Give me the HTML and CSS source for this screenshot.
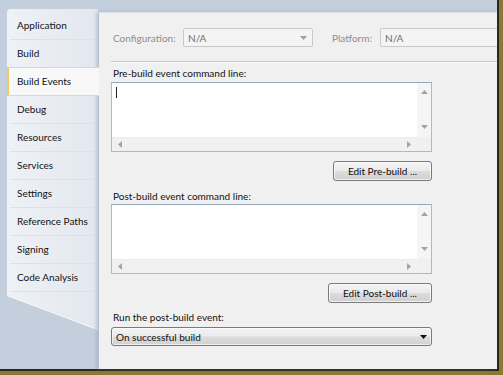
FILE: index.html
```html
<!DOCTYPE html>
<html>
  <head>
    <title>Project Properties - Build Events</title>
    <link rel="stylesheet" href="styles.css">
  </head>
  <body>
    <div class="window">
      <div class="sidebar">
        <div class="tab-list">
          <div class="tab">Application</div>
          <div class="tab">Build</div>
          <div class="tab active">Build Events</div>
          <div class="tab">Debug</div>
          <div class="tab">Resources</div>
          <div class="tab">Services</div>
          <div class="tab">Settings</div>
          <div class="tab">Reference Paths</div>
          <div class="tab">Signing</div>
          <div class="tab">Code Analysis</div>
        </div>
        <svg class="tab-tail" width="91" height="40" viewBox="0 0 91 40">
          <defs>
            <linearGradient id="tailFill" x1="0" y1="0" x2="1" y2="0">
              <stop offset="0" stop-color="#eef1f5" />
              <stop offset="1" stop-color="#e3e8ef" />
            </linearGradient>
          </defs>
          <polygon points="0,0 91,0 91,40 88,36 0,3" fill="url(#tailFill)" />
          <line x1="0" y1="3.5" x2="88" y2="36.5" stroke="#ffffff" stroke-width="1" />
        </svg>
      </div>

      <div class="main-content">
        <div class="config-row">
          <span class="config-label">Configuration:</span>
          <div class="combo disabled">
            <span>N/A</span>
            <svg width="7" height="4" viewBox="0 0 7 4"><polygon points="0,0 7,0 3.5,4" fill="#a0a0a0" /></svg>
          </div>
          <span class="config-label platform">Platform:</span>
          <div class="combo disabled">
            <span>N/A</span>
          </div>
        </div>

        <div class="separator"></div>

        <div class="form">
          <div class="field-label">Pre-build event command line:</div>
          <div class="text-box">
            <div class="text-area"><span class="caret"></span></div>
            <div class="vscroll">
              <svg width="7" height="4" viewBox="0 0 7 4"><polygon points="3.5,0 7,4 0,4" fill="#a4a4a4" /></svg>
              <svg width="7" height="4" viewBox="0 0 7 4"><polygon points="0,0 7,0 3.5,4" fill="#a4a4a4" /></svg>
            </div>
            <div class="hscroll">
              <svg width="4" height="7" viewBox="0 0 4 7"><polygon points="4,0 4,7 0,3.5" fill="#a4a4a4" /></svg>
              <svg width="4" height="7" viewBox="0 0 4 7"><polygon points="0,0 4,3.5 0,7" fill="#a4a4a4" /></svg>
            </div>
            <div class="corner"></div>
          </div>
          <button class="edit-btn pre">Edit Pre-build ...</button>

          <div class="field-label post">Post-build event command line:</div>
          <div class="text-box">
            <div class="text-area"></div>
            <div class="vscroll">
              <svg width="7" height="4" viewBox="0 0 7 4"><polygon points="3.5,0 7,4 0,4" fill="#a4a4a4" /></svg>
              <svg width="7" height="4" viewBox="0 0 7 4"><polygon points="0,0 7,0 3.5,4" fill="#a4a4a4" /></svg>
            </div>
            <div class="hscroll">
              <svg width="4" height="7" viewBox="0 0 4 7"><polygon points="4,0 4,7 0,3.5" fill="#a4a4a4" /></svg>
              <svg width="4" height="7" viewBox="0 0 4 7"><polygon points="0,0 4,3.5 0,7" fill="#a4a4a4" /></svg>
            </div>
            <div class="corner"></div>
          </div>
          <button class="edit-btn post">Edit Post-build ...</button>

          <div class="field-label run">Run the post-build event:</div>
          <div class="dropdown">
            <span>On successful build</span>
            <svg width="7" height="4" viewBox="0 0 7 4"><polygon points="0,0 7,0 3.5,4" fill="#111" /></svg>
          </div>
        </div>
      </div>
    </div>
  </body>
</html>
```

FILE: styles.css
```css
* {
  box-sizing: border-box;
}

body {
  margin: 0;
  overflow: hidden;
  background-color: #8a7936;
  font-family: Lato, "Open Sans", sans-serif;
  font-size: 10px;
  color: #111111;
}

.window {
  width: 499px;
  height: 371px;
  display: flex;
  padding: 9px 0 0 7px;
  background-color: #c4cfdd;
  border-right: 2px solid #2b281b;
  border-bottom: 2px solid #2b281b;
}

.sidebar {
  width: 91px;
  flex-shrink: 0;
  display: flex;
  flex-direction: column;
}

.tab-list {
  padding-top: 3px;
  border-radius: 4px 0 0 0;
  background: linear-gradient(to right, #eef1f5, #e3e8ef);
}

.tab {
  height: 28px;
  line-height: 27px;
  margin: 0 3px;
  padding-left: 7px;
  border-bottom: 1px solid #dce1e8;
  white-space: nowrap;
}

.tab.active {
  position: relative;
  z-index: 1;
  margin: -1px -1px 0 0;
  height: 29px;
  padding-left: 8px;
  background-color: #f8f8f8;
  border-left: 2px solid #f3c766;
  border-top: 1px solid #d3d8df;
  border-bottom: 1px solid #d3d8df;
}

.tab-tail {
  display: block;
}

.main-content {
  flex: 1;
  margin-top: 3px;
  padding-left: 12px;
  overflow: hidden;
  background-color: #f0f0f0;
  border-left: 1px solid #b3bfce;
  border-top: 1px solid #dde2e9;
  box-shadow: -2px 0 3px rgba(120, 140, 165, 0.35);
}

.config-row {
  display: flex;
  align-items: center;
  margin-top: 15px;
  white-space: nowrap;
}

.config-label {
  width: 72px;
  padding-left: 2px;
  flex-shrink: 0;
  color: #8e8e8e;
}

.config-label.platform {
  width: 67px;
  padding-left: 19px;
}

.combo {
  width: 130px;
  height: 19px;
  flex-shrink: 0;
  display: flex;
  align-items: center;
  justify-content: space-between;
  padding: 0 5px 0 4px;
  border: 1px solid #c9c9c9;
  border-radius: 2px;
  background-color: #f4f4f4;
  color: #6f6f6f;
}

.separator {
  margin-top: 14px;
  height: 2px;
  border-top: 1px solid #c8c8c8;
  border-bottom: 1px solid #fbfbfb;
}

.form {
  width: 321px;
  display: flex;
  flex-direction: column;
}

.field-label {
  height: 16px;
  line-height: 16px;
  margin: 2px 0 1px;
  padding-left: 2px;
}

.field-label.post {
  margin: 7px 0 0;
}

.field-label.run {
  margin: 6px 0 2px;
}

.text-box {
  height: 70px;
  display: grid;
  grid-template-columns: 1fr 14px;
  grid-template-rows: 1fr 14px;
  border: 1px solid #abb9cb;
  border-top-color: #98a8bc;
  background-color: #ffffff;
}

.text-area {
  position: relative;
  background-color: #ffffff;
}

.caret {
  position: absolute;
  left: 4px;
  top: 4px;
  width: 1px;
  height: 11px;
  background-color: #222;
}

.vscroll {
  display: flex;
  flex-direction: column;
  align-items: center;
  justify-content: space-between;
  padding: 7px 0 8px;
  background-color: #f5f5f5;
}

.hscroll {
  display: flex;
  align-items: center;
  justify-content: space-between;
  padding: 0 6px;
  background-color: #f1f1f1;
  border-top: 1px solid #ececec;
}

.corner {
  background-color: #f0f0f0;
}

.edit-btn {
  align-self: flex-end;
  height: 20px;
  margin-top: 9px;
  padding: 0;
  font-family: inherit;
  font-size: 10px;
  color: #111111;
  border: 1px solid #7a7a7a;
  border-radius: 3px;
  background: linear-gradient(#f3f3f3 0%, #ebebeb 48%, #dcdcdc 52%, #cfcfcf 100%);
  box-shadow: inset 0 0 0 1px rgba(255, 255, 255, 0.7);
}

.edit-btn.pre {
  width: 99px;
}

.edit-btn.post {
  width: 104px;
}

.dropdown {
  height: 19px;
  display: flex;
  align-items: center;
  justify-content: space-between;
  padding: 0 4px 0 4px;
  border: 1px solid #7a7a7a;
  border-radius: 3px;
  background: linear-gradient(#f3f3f3 0%, #ebebeb 48%, #dddddd 52%, #d1d1d1 100%);
  box-shadow: inset 0 0 0 1px rgba(255, 255, 255, 0.6);
}
```
